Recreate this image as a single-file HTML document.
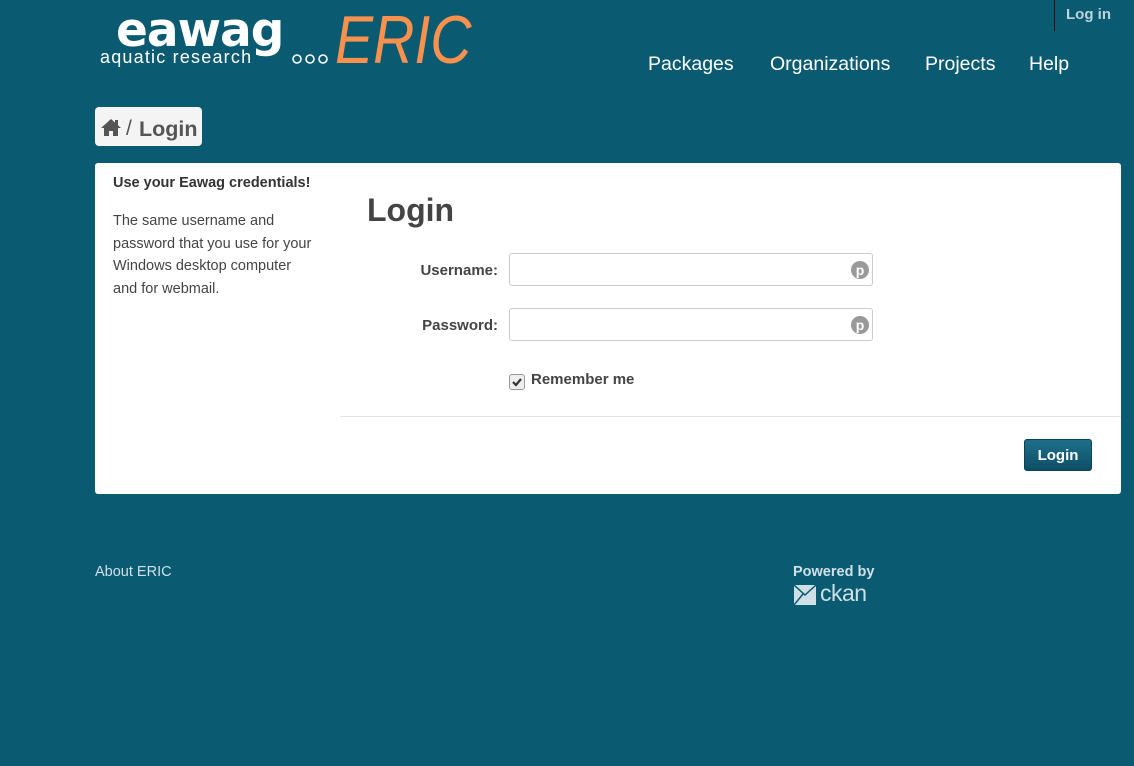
<!DOCTYPE html>
<html><head><meta charset="utf-8"><style>
*{box-sizing:border-box;margin:0;padding:0}
body{width:1134px;height:766px;background:#0a5a72;font-family:"Liberation Sans",sans-serif;color:#333;position:relative;overflow:hidden}
.abs{position:absolute}
.nav a{position:absolute;top:53px;color:#fff;font-size:19.5px;text-decoration:none}
.card{left:95px;top:163px;width:1026px;height:331px;background:#fff;border-radius:3px}
label.l{position:absolute;font-weight:bold;font-size:15px;color:#444;text-align:right;width:140px}
.inp{position:absolute;width:364px;height:33px;border:1px solid #ccc;border-radius:3px;background:#fff}
.pi{position:absolute;right:3px;top:7px;width:18px;height:18px;border-radius:50%;background:#999;color:#fff;font-size:14px;font-weight:bold;text-align:center;line-height:18px}
</style></head><body>
<div class="abs" style="left:116px;top:3px;color:#fff;font-family:'DejaVu Sans',sans-serif;font-weight:bold;font-size:47px;letter-spacing:-1px;line-height:56px">eawag</div>
<div class="abs" style="left:100px;top:47px;color:#fff;font-size:18px;letter-spacing:1.2px">aquatic research</div>
<svg class="abs" style="left:292px;top:53px" width="38" height="12"><g fill="none" stroke="#fff" stroke-width="1.6"><circle cx="5" cy="6" r="4"/><circle cx="18" cy="6" r="4"/><circle cx="31" cy="6" r="4"/></g></svg>
<div class="abs" style="left:335px;top:0px;color:#f7914d;font-size:68px;font-style:italic;line-height:80px;transform:scaleX(0.84);transform-origin:left top">ERIC</div>
<div class="abs" style="left:1054px;top:0;width:1px;height:31px;background:#111"></div>
<div class="abs" style="left:1066px;top:6px;color:#bcd3dc;font-weight:bold;font-size:15px">Log in</div>
<div class="nav"><a style="left:648px">Packages</a><a style="left:770px">Organizations</a><a style="left:925px">Projects</a><a style="left:1029px">Help</a></div>
<div class="abs" style="left:95px;top:107px;width:107px;height:39px;background:#f4f4f4;border-radius:4px"></div>
<svg class="abs" style="left:101px;top:118px" width="20" height="18" viewBox="0 0 20 18"><path d="M10 1L0 10h3v8h5v-5h4v5h5v-8h3z" fill="#555"/><rect x="14" y="2" width="3" height="5" fill="#555"/></svg>
<div class="abs" style="left:126px;top:117px;font-size:21px;color:#555">/</div>
<div class="abs" style="left:139px;top:117px;font-size:21.5px;font-weight:bold;color:#555">Login</div>
<div class="abs card">
 <div class="abs" style="left:18px;top:12px;font-weight:bold;font-size:14.5px;color:#333">Use your Eawag credentials!</div>
 <div class="abs" style="left:18px;top:47px;font-size:14.5px;line-height:22.5px;color:#444;width:200px">The same username and password that you use for your Windows desktop computer and for webmail.</div>
 <div class="abs" style="left:272px;top:29px;font-size:32px;font-weight:bold;color:#444">Login</div>
 <label class="l" style="left:263px;top:99px">Username:</label>
 <div class="inp" style="left:414px;top:90px"><div class="pi">p</div></div>
 <label class="l" style="left:263px;top:154px">Password:</label>
 <div class="inp" style="left:414px;top:145px"><div class="pi">p</div></div>
 <div class="abs" style="left:414px;top:211px;width:16px;height:16px;border:1px solid #999;border-radius:3px;background:#eee"><svg width="14" height="14" viewBox="0 0 14 14"><path d="M3 7l3 3 5-6" stroke="#333" stroke-width="2.2" fill="none"/></svg></div>
 <div class="abs" style="left:436px;top:208px;font-weight:bold;font-size:15px;color:#444">Remember me</div>
 <div class="abs" style="left:245px;top:253px;width:781px;height:1px;background:#e5e5e5"></div>
 <div class="abs" style="left:929px;top:276px;width:68px;height:32px;background:linear-gradient(#1e6f8a,#0e4f66);border:1px solid #0a4256;border-radius:3px;color:#fff;font-weight:bold;font-size:15px;text-align:center;line-height:31px">Login</div>
</div>
<div class="abs" style="left:95px;top:564px;color:#d0e0e6;font-size:14.5px">About ERIC</div>
<div class="abs" style="left:793px;top:564px;color:#d0e0e6;font-size:14.5px;font-weight:bold">Powered by</div>
<svg class="abs" style="left:794px;top:585px" width="22" height="20" viewBox="0 0 22 20"><rect width="22" height="20" fill="#cfdfe6"/><path d="M0 0l11 10L22 0M0 20L9 9" stroke="#0a5a72" stroke-width="1.5" fill="none"/></svg>
<div class="abs" style="left:820px;top:580px;color:#cfdfe6;font-size:23px;letter-spacing:-0.5px">ckan</div>
</body></html>
